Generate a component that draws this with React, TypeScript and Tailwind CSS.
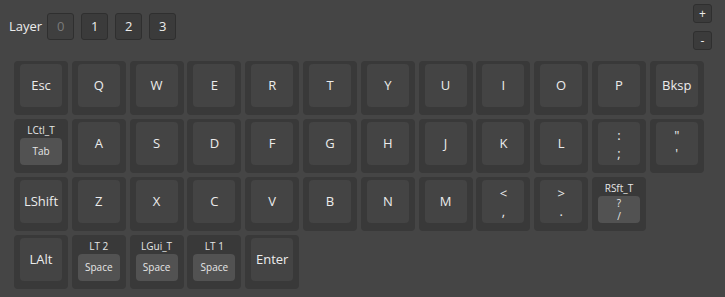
import React from "react";

type KeyDef = { label: string; hold?: string };

const rows: KeyDef[][] = [
  ["Esc", "Q", "W", "E", "R", "T", "Y", "U", "I", "O", "P", "Bksp"].map((label) => ({ label })),
  [
    { label: "Tab", hold: "LCtl_T" },
    ...["A", "S", "D", "F", "G", "H", "J", "K", "L"].map((label) => ({ label })),
    { label: ":\n;" },
    { label: "\"\n'" },
  ],
  [
    { label: "LShift" },
    ...["Z", "X", "C", "V", "B", "N", "M"].map((label) => ({ label })),
    { label: "<\n," },
    { label: ">\n." },
    { label: "?\n/", hold: "RSft_T" },
  ],
  [
    { label: "LAlt" },
    { label: "Space", hold: "LT 2" },
    { label: "Space", hold: "LGui_T" },
    { label: "Space", hold: "LT 1" },
    { label: "Enter" },
  ],
];

const Label = ({ text, small }: { text: string; small?: boolean }) => {
  const lines = text.split("\n");
  if (lines.length === 1) {
    return <span className={small ? "text-[10px]" : "text-[13px]"}>{text}</span>;
  }
  return (
    <span className={`flex flex-col items-center ${small ? "text-[10px] leading-[13px]" : "text-[13px] leading-[18px]"}`}>
      {lines.map((l, i) => (
        <span key={i}>{l}</span>
      ))}
    </span>
  );
};

const Key = ({ k }: { k: KeyDef }) => (
  <div className="w-[54px] h-[54px] rounded-[4px] bg-[#393939] pt-[3px] px-[6px] pb-[8px] flex flex-col">
    {k.hold ? (
      <>
        <div className="h-[16px] flex items-center justify-center text-[10px] text-[#e6e6e6]">{k.hold}</div>
        <div className="flex-1 rounded-[4px] bg-[#525252] flex items-center justify-center text-[#e6e6e6]">
          <Label text={k.label} small />
        </div>
      </>
    ) : (
      <div className="flex-1 rounded-[4px] bg-[#444444] flex items-center justify-center text-[#ececec]">
        <Label text={k.label} />
      </div>
    )}
  </div>
);

const LayerButton = ({ n, active }: { n: number; active?: boolean }) => (
  <button
    className={`w-[27px] h-[27px] rounded-[3px] border border-[#2f2f2f] flex items-center justify-center text-[13px] ${
      active ? "bg-[#3f3f3f] text-[#7a7a7a]" : "bg-[#3b3b3b] text-[#ececec]"
    }`}
  >
    {n}
  </button>
);

const SmallButton = ({ children }: { children: React.ReactNode }) => (
  <button className="w-[19px] h-[19px] rounded-[3px] border border-[#2f2f2f] bg-[#3b3b3b] flex items-center justify-center text-[12px] text-[#ececec] leading-none">
    {children}
  </button>
);

export default function App() {
  return (
    <div
      className="w-[725px] h-[297px] bg-[#454545] overflow-hidden"
      style={{ fontFamily: '"Open Sans", "Noto Sans", sans-serif' }}
    >
      <div className="flex justify-between items-start pt-[4px] pr-[13px]">
        <div className="flex items-center gap-[7px] pl-[9px] mt-[9px]">
          <span className="text-[13px] text-[#ececec] -mr-[2px]">Layer</span>
          <LayerButton n={0} active />
          <LayerButton n={1} />
          <LayerButton n={2} />
          <LayerButton n={3} />
        </div>
        <div className="flex flex-col gap-[8px]">
          <SmallButton>+</SmallButton>
          <SmallButton>-</SmallButton>
        </div>
      </div>
      <div className="mt-[11px] ml-[14px] flex flex-col gap-[4px]">
        {rows.map((row, ri) => (
          <div key={ri} className="flex gap-[3.8px]">
            {row.map((k, ki) => (
              <Key key={ki} k={k} />
            ))}
          </div>
        ))}
      </div>
    </div>
  );
}
